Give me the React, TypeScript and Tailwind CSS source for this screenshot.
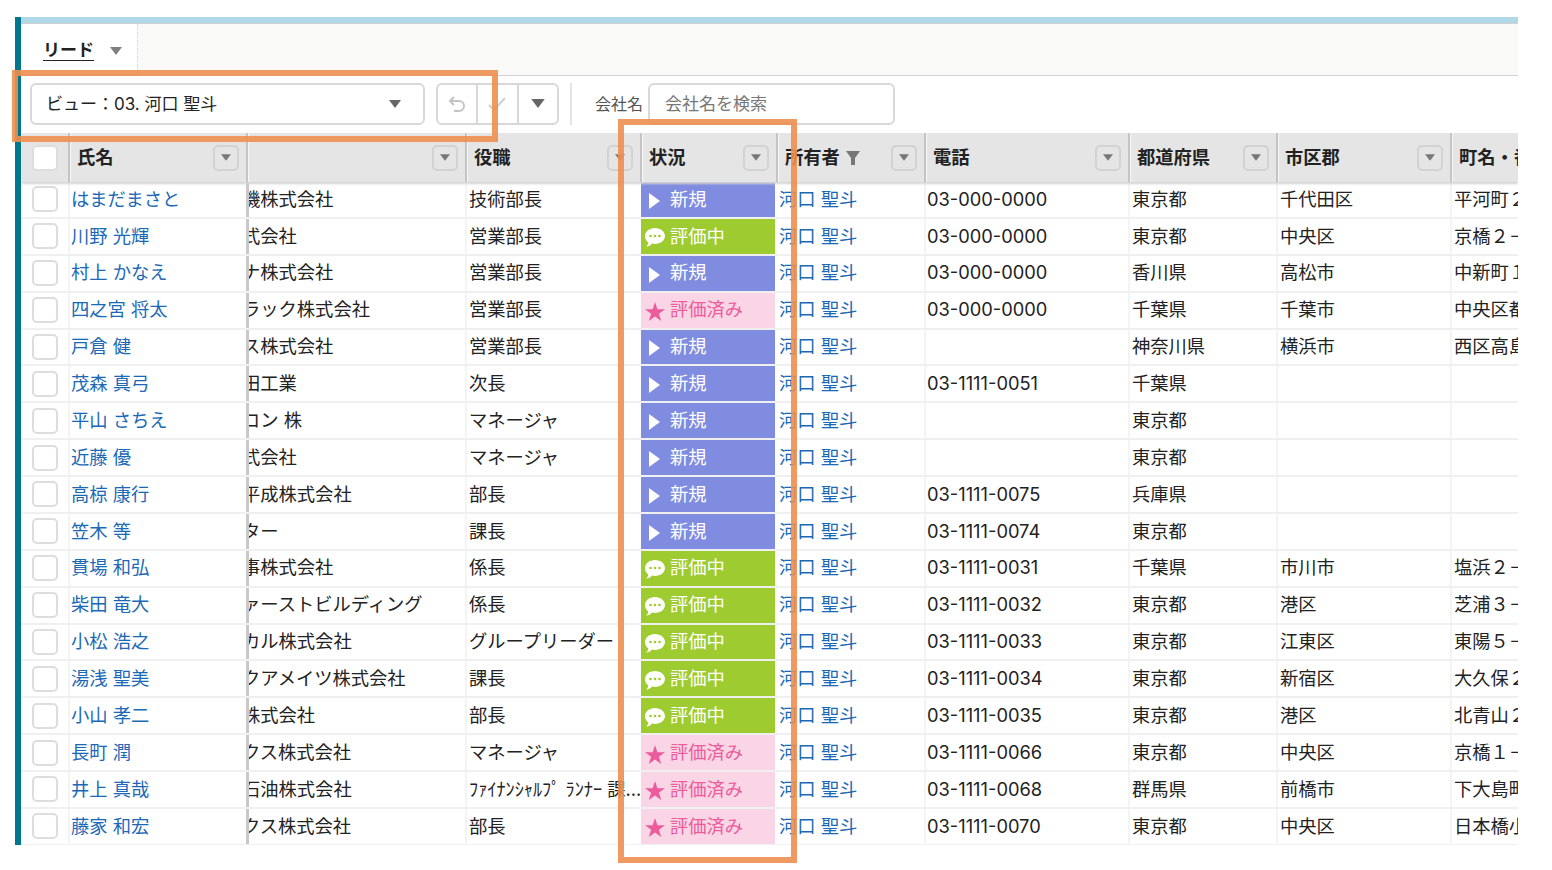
import type { ReactNode } from 'react'

// ── Data ─────────────────────────────────────────────────────────────

type Status = 'new' | 'review' | 'done'

const ROWS: [string, string, string, Status, string, string, string, string][] = [
  ['はまだまさと', '機株式会社', '技術部長', 'new', '03-000-0000', '東京都', '千代田区', '平河町２'],
  ['川野 光輝', '式会社', '営業部長', 'review', '03-000-0000', '東京都', '中央区', '京橋２－'],
  ['村上 かなえ', 'ナ株式会社', '営業部長', 'new', '03-000-0000', '香川県', '高松市', '中新町１'],
  ['四之宮 将太', 'ラック株式会社', '営業部長', 'done', '03-000-0000', '千葉県', '千葉市', '中央区都'],
  ['戸倉 健', 'ス株式会社', '営業部長', 'new', '', '神奈川県', '横浜市', '西区高島'],
  ['茂森 真弓', '田工業', '次長', 'new', '03-1111-0051', '千葉県', '', ''],
  ['平山 さちえ', 'コン 株', 'マネージャ', 'new', '', '東京都', '', ''],
  ['近藤 優', '式会社', 'マネージャ', 'new', '', '東京都', '', ''],
  ['高椋 康行', '平成株式会社', '部長', 'new', '03-1111-0075', '兵庫県', '', ''],
  ['笠木 等', 'ター', '課長', 'new', '03-1111-0074', '東京都', '', ''],
  ['貫場 和弘', '事株式会社', '係長', 'review', '03-1111-0031', '千葉県', '市川市', '塩浜２－'],
  ['柴田 竜大', 'ァーストビルディング', '係長', 'review', '03-1111-0032', '東京都', '港区', '芝浦３－'],
  ['小松 浩之', 'カル株式会社', 'グループリーダー', 'review', '03-1111-0033', '東京都', '江東区', '東陽５－'],
  ['湯浅 聖美', 'クアメイツ株式会社', '課長', 'review', '03-1111-0034', '東京都', '新宿区', '大久保２'],
  ['小山 孝二', '株式会社', '部長', 'review', '03-1111-0035', '東京都', '港区', '北青山２'],
  ['長町 潤', 'クス株式会社', 'マネージャ', 'done', '03-1111-0066', '東京都', '中央区', '京橋１－'],
  ['井上 真哉', '石油株式会社', 'ﾌｧｲﾅﾝｼｬﾙﾌﾟ ﾗﾝﾅｰ 課...', 'done', '03-1111-0068', '群馬県', '前橋市', '下大島町'],
  ['藤家 和宏', 'クス株式会社', '部長', 'done', '03-1111-0070', '東京都', '中央区', '日本橋小'],
]

const COLS = 'grid grid-cols-[47px_178px_219px_175px_136px_148px_204px_148px_174px_200px]'

// ── Small parts ──────────────────────────────────────────────────────

function Caret({ className }: { className?: string }) {
  return (
    <svg viewBox="0 0 12 8" className={className}>
      <path d="M0 0h12L6 8z" fill="currentColor" />
    </svg>
  )
}

function Checkbox() {
  return <div className="w-[26px] h-[26px] rounded-[5px] border-2 border-[#dddddd] bg-white" />
}

function HeaderCell({ children, button = true }: { children?: ReactNode; button?: boolean }) {
  return (
    <div className="h-full flex items-center justify-between pl-[7px] pr-[7px] border-l-2 border-[#c4c4c4] shadow-[inset_1px_0_0_#f7f7f7] min-w-0">
      <div className="flex items-center gap-[6px] font-bold whitespace-nowrap overflow-hidden">{children}</div>
      {button && (
        <div className="shrink-0 w-[26px] h-[26px] rounded-[5px] border-2 border-[#d2d2d2] flex items-center justify-center">
          <Caret className="w-[10px] h-[7px] text-[#777777]" />
        </div>
      )}
    </div>
  )
}

function StatusCell({ status }: { status: Status }) {
  if (status === 'new') {
    return (
      <div className="h-full bg-[#7f8ce0] text-white flex items-center">
        <svg viewBox="0 0 11 16" className="w-[11px] h-[16px] ml-[8px] mr-[10px] mt-[3px]">
          <path d="M0 0l11 8-11 8z" fill="currentColor" />
        </svg>
        新規
      </div>
    )
  }
  if (status === 'review') {
    return (
      <div className="h-full bg-[#9ecb2f] text-white flex items-center">
        <svg viewBox="0 0 20 19" className="w-[20px] h-[19px] ml-[4px] mr-[5px] mt-[3px]">
          <path d="M10 0c5.500 0 10 3.600 10 8s-4.500 8-10 8c-1 0-2-.1-2.900-.4C5.500 17.300 3.500 18.500 1.200 18.800c1.100-1.200 1.900-2.600 2.100-4.300C1.300 13 0 10.700 0 8c0-4.400 4.500-8 10-8z" fill="currentColor" />
          <circle cx="5.500" cy="8" r="1.300" fill="#9ecb2f" />
          <circle cx="10" cy="8" r="1.300" fill="#9ecb2f" />
          <circle cx="14.500" cy="8" r="1.300" fill="#9ecb2f" />
        </svg>
        評価中
      </div>
    )
  }
  return (
    <div className="h-full bg-[#f9d5e5] text-[#ec5c9c] flex items-center">
      <svg viewBox="0 0 20 19" className="w-[20px] h-[19px] ml-[4px] mr-[5px] mt-[3px]">
        <path d="M10 0l2.400 7.200H20l-6.100 4.500 2.300 7.300L10 14.500 3.800 19l2.300-7.300L0 7.200h7.600z" fill="currentColor" />
      </svg>
      評価済み
    </div>
  )
}

function Cell({ children, pad = 'pl-[2px]', line = true }: { children?: ReactNode; pad?: string; line?: boolean }) {
  return (
    <div className={`h-full flex items-center ${pad} whitespace-nowrap overflow-hidden min-w-0 ${line ? 'border-l-2 border-[#f4f4f4]' : ''}`}>
      {children}
    </div>
  )
}

// ── Page ─────────────────────────────────────────────────────────────

export default function App() {
  return (
    <div className="relative w-[1552px] h-[870px] bg-white overflow-hidden pt-[17px] pl-[15px] text-[#222222] text-[18.3px] font-['Inter','Noto_Sans_CJK_JP',sans-serif]">
      <div className="w-[1503px] h-[828px] overflow-hidden flex flex-col border-l-[6px] border-[#00778f]">
        <div className="h-[6px] bg-[#b1d8e6] shrink-0" />

        {/* tab row */}
        <div className="h-[53px] shrink-0 flex bg-[#f9f9f7] border-t border-b border-[#d0d0d0]">
          <div className="w-[117px] bg-white border-r border-b border-dotted border-[#c8c8c8] flex items-center pl-[22px] pt-[3px] gap-4">
            <span className="text-[17px] font-bold underline underline-offset-4">リード</span>
            <Caret className="w-3 h-2 text-[#808080]" />
          </div>
        </div>

        {/* toolbar */}
        <div className="h-[57px] pb-[2px] shrink-0 flex items-center pl-[9px] text-[17px]">
          <div className="w-[395px] h-[42px] rounded-[6px] border-2 border-[#d8d8d8] flex items-center justify-between pl-[14px] pr-[22px]">
            <span className="pt-[2px]">ビュー：03. 河口 聖斗</span>
            <Caret className="w-3 h-2 text-[#666666]" />
          </div>
          <div className="ml-[11px] w-[123px] h-[42px] rounded-[6px] border-2 border-[#d8d8d8] flex divide-x-2 divide-[#d8d8d8]">
            <div className="flex-1 flex items-center justify-center">
              <svg viewBox="0 0 20 20" className="w-5 h-5 text-[#c4c4c4]" fill="none" stroke="currentColor" strokeWidth="2">
                <path d="M7 3L3 7l4 4" />
                <path d="M3 7h9a5 5 0 010 10H7" />
              </svg>
            </div>
            <div className="flex-1 flex items-center justify-center">
              <svg viewBox="0 0 20 20" className="w-5 h-5 text-[#d0d0d0]" fill="none" stroke="currentColor" strokeWidth="2">
                <path d="M2 11l5 5L18 4" />
              </svg>
            </div>
            <div className="flex-1 flex items-center justify-center">
              <Caret className="w-[14px] h-[9px] text-[#666666]" />
            </div>
          </div>
          <div className="ml-[11px] w-[2px] h-[42px] bg-[#e4e4e4]" />
          <span className="ml-[23px] w-[53px] text-[16px] text-[#555555]">会社名</span>
          <div className="w-[247px] h-[42px] rounded-[6px] border-2 border-[#d8d8d8] flex items-center pl-[15px] pt-[2px] text-[#777777]">
            会社名を検索
          </div>
        </div>

        {/* table header */}
        <div className={`${COLS} h-[49px] shrink-0 items-center bg-[#e5e5e5] shadow-[0_2px_2px_#d4d4d4] relative`}>
          <div className="pl-[11px]"><Checkbox /></div>
          <HeaderCell>氏名</HeaderCell>
          <HeaderCell />
          <HeaderCell>役職</HeaderCell>
          <HeaderCell>状況</HeaderCell>
          <HeaderCell>
            所有者
            <svg viewBox="0 0 14 14" className="w-[14px] h-[14px] text-[#777777]">
              <path d="M0 0h14L9 7v7H5V7z" fill="currentColor" />
            </svg>
          </HeaderCell>
          <HeaderCell>電話</HeaderCell>
          <HeaderCell>都道府県</HeaderCell>
          <HeaderCell>市区郡</HeaderCell>
          <HeaderCell button={false}>町名・番地</HeaderCell>
        </div>

        {/* rows */}
        {ROWS.map((r, i) => (
          <div key={i} className={`${COLS} h-[36.89px] shrink-0 items-center border-b-2 border-[#f0f0f0]`}>
            <div className="pl-[11px]"><Checkbox /></div>
            <Cell pad="pl-px"><span className="text-[#1b69b6]">{r[0]}</span></Cell>
            <div className="h-full overflow-hidden whitespace-nowrap flex items-center border-l-[3px] border-[#c8c8c8]">
              <span className="-ml-[7px]">{r[1]}</span>
            </div>
            <Cell pad="pl-[2px]">{r[2]}</Cell>
            <div className="h-full px-px">
              <StatusCell status={r[3]} />
            </div>
            <Cell pad="pl-[3px]" line={false}><span className="text-[#1b69b6]">河口 聖斗</span></Cell>
            <Cell pad="pl-px">{r[4]}</Cell>
            <Cell>{r[5]}</Cell>
            <Cell>{r[6]}</Cell>
            <Cell>{r[7]}</Cell>
          </div>
        ))}
      </div>

      {/* annotation frames */}
      <div className="absolute left-[12px] top-[70px] w-[486px] h-[72px] border-[6px] border-[#ed8f4f]/90 pointer-events-none" />
      <div className="absolute left-[618px] top-[119px] w-[179px] h-[744px] border-[6px] border-[#ed8f4f]/90 pointer-events-none" />
    </div>
  )
}
